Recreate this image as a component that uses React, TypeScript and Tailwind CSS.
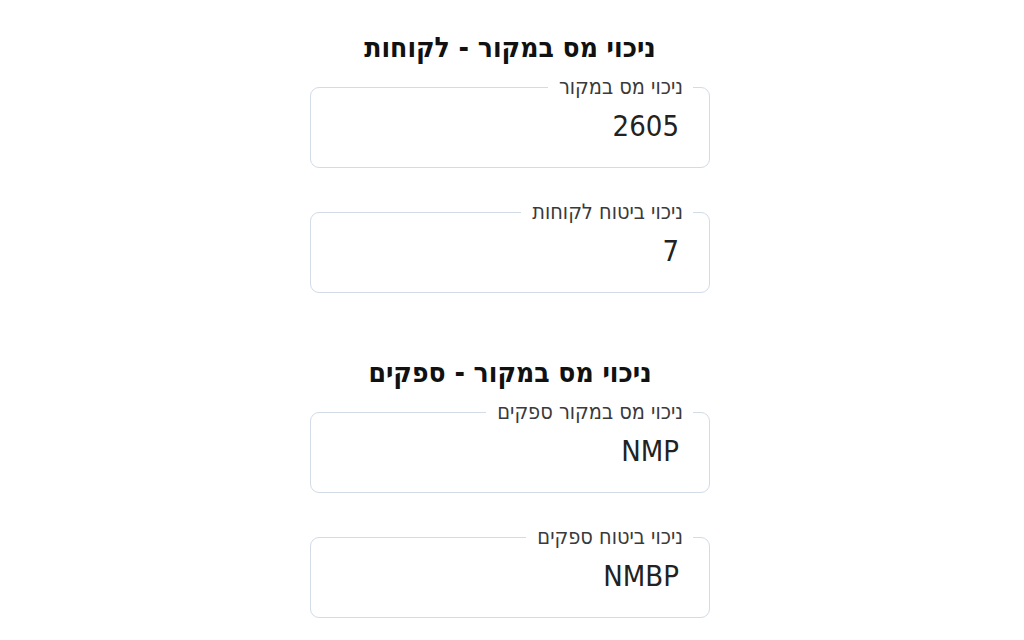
import React from "react";

type Field = { label: string; value: string };

const sections: { title: string; fields: Field[] }[] = [
  {
    title: "ניכוי מס במקור - לקוחות",
    fields: [
      { label: "ניכוי מס במקור", value: "2605" },
      { label: "ניכוי ביטוח לקוחות", value: "7" },
    ],
  },
  {
    title: "ניכוי מס במקור - ספקים",
    fields: [
      { label: "ניכוי מס במקור ספקים", value: "NMP" },
      { label: "ניכוי ביטוח ספקים", value: "NMBP" },
    ],
  },
];

function OutlinedField({ label, value }: Field) {
  return (
    <fieldset className="m-0 rounded-[9px] border border-[#d3dbe6] pr-[16px] pl-3 pb-[23px]">
      <legend className="pl-[11px] pr-[10px] text-[21.5px] leading-[24px] text-[#3a3a3a]">{label}</legend>
      <div className="pr-[14px] pt-[9px] text-[29px] leading-[36px] text-[#222222]">{value}</div>
    </fieldset>
  );
}

export default function App() {
  return (
    <div className="min-h-[640px] bg-white pl-[310px] pt-[32px] font-['DejaVu_Sans_Condensed',sans-serif]">
      <div dir="rtl" className="w-[400px]">
        {sections.map((s, i) => (
          <section key={s.title} className={i > 0 ? "mt-[64px]" : ""}>
            <h2 className="text-center text-[28px] font-bold leading-[32px] text-[#111111]">{s.title}</h2>
            <div className="mt-[11px] flex flex-col gap-[32px]">
              {s.fields.map((f) => (
                <OutlinedField key={f.label} {...f} />
              ))}
            </div>
          </section>
        ))}
      </div>
    </div>
  );
}
